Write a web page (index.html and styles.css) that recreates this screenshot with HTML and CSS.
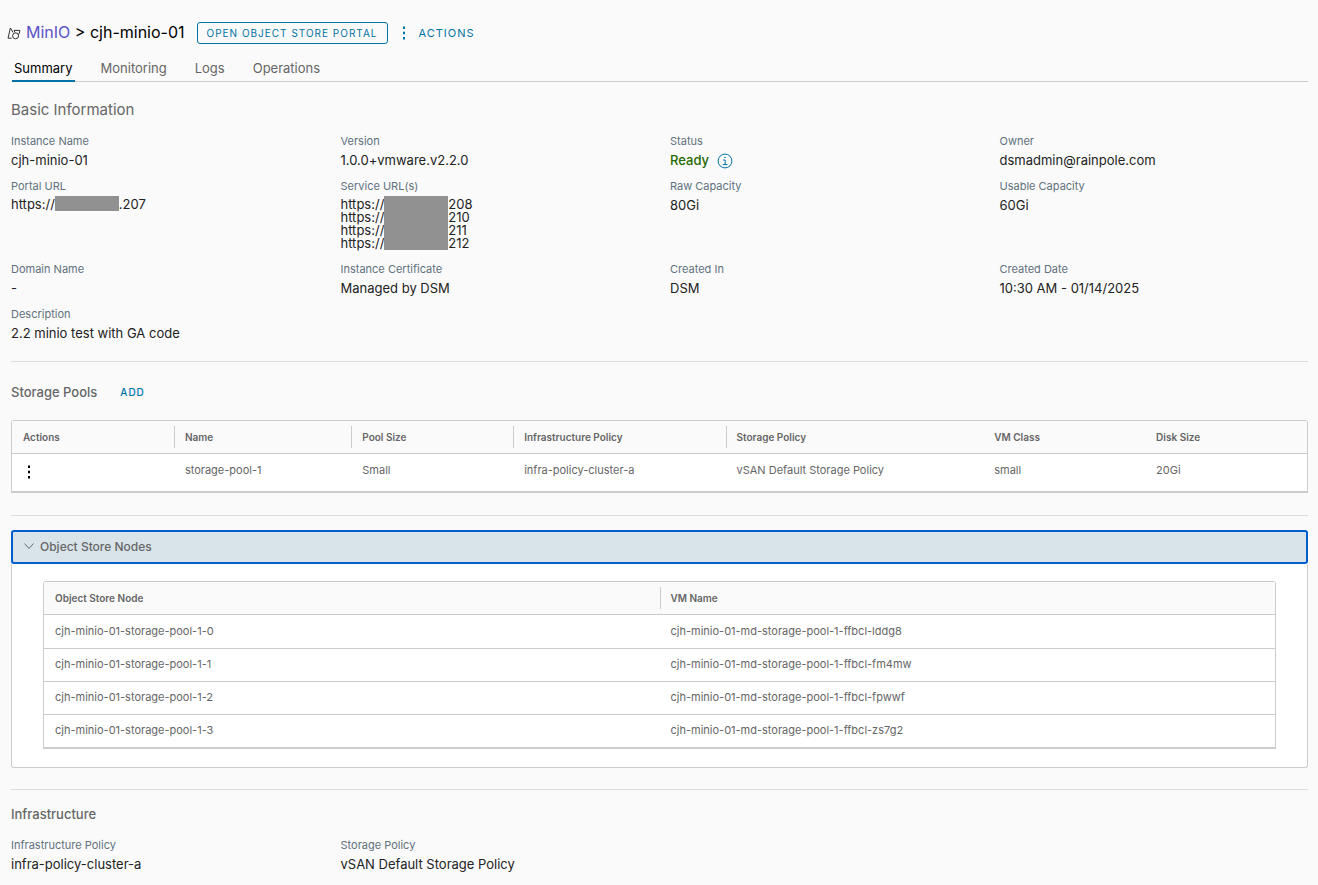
FILE: index.html
```html
<!DOCTYPE html>
<html lang="en">
<head>
    <meta charset="UTF-8">
    <meta name="viewport" content="width=device-width, initial-scale=1.0">
    <title>cjh-minio-01 - MinIO</title>
    <link rel="stylesheet" href="styles.css">
</head>
<body>
    <!-- Header -->
    <header class="page-header">
        <svg class="minio-icon" viewBox="0 0 14 14" width="14" height="14" aria-hidden="true">
            <path d="M4.6 12.2H1L3.4 2L6 6.4M7 4.4H12.8L12.4 7L11.2 8.6M7 4.4L7.8 6.4"/>
            <circle cx="8.6" cy="9.8" r="3"/>
        </svg>
        <h1><a href="#">MinIO</a> &gt; cjh-minio-01</h1>
        <button type="button" class="btn-outline">Open Object Store Portal</button>
        <button type="button" class="btn-actions">
            <svg viewBox="0 0 4 14" width="4" height="14" aria-hidden="true">
                <path d="M1 0.5h2v2.4h-2zM1 5.8h2v2.4h-2zM1 11.1h2v2.4h-2z"/>
            </svg>
            Actions
        </button>
    </header>

    <nav class="tabs">
        <a href="#" class="active">Summary</a>
        <a href="#">Monitoring</a>
        <a href="#">Logs</a>
        <a href="#">Operations</a>
    </nav>

    <main>
        <!-- Basic Information -->
        <section>
            <h2 class="title-light">Basic Information</h2>
            <dl class="info-grid">
                <div><dt>Instance Name</dt><dd>cjh-minio-01</dd></div>
                <div><dt>Version</dt><dd>1.0.0+vmware.v2.2.0</dd></div>
                <div>
                    <dt>Status</dt>
                    <dd class="status">
                        Ready
                        <svg viewBox="0 0 16 16" width="16" height="16" aria-hidden="true">
                            <circle cx="8" cy="8" r="6.9"/>
                            <path d="M6 7h2.2v4.6M5.7 11.6h4.8M7.2 4.4h1.6"/>
                        </svg>
                    </dd>
                </div>
                <div><dt>Owner</dt><dd>dsmadmin@rainpole.com</dd></div>
                <div>
                    <dt>Portal URL</dt>
                    <dd class="urls"><span>https://</span><span class="redacted"></span><span>.207</span></dd>
                </div>
                <div>
                    <dt>Service URL(s)</dt>
                    <dd class="urls">
                        <span>https://<br>https://<br>https://<br>https://</span>
                        <span class="redacted"></span>
                        <span>208<br>210<br>211<br>212</span>
                    </dd>
                </div>
                <div><dt>Raw Capacity</dt><dd>80Gi</dd></div>
                <div><dt>Usable Capacity</dt><dd>60Gi</dd></div>
                <div><dt>Domain Name</dt><dd>-</dd></div>
                <div><dt>Instance Certificate</dt><dd>Managed by DSM</dd></div>
                <div><dt>Created In</dt><dd>DSM</dd></div>
                <div><dt>Created Date</dt><dd>10:30 AM - 01/14/2025</dd></div>
                <div><dt>Description</dt><dd>2.2 minio test with GA code</dd></div>
            </dl>
        </section>

        <!-- Storage Pools -->
        <section class="divided pools">
            <div class="pools-head">
                <h2>Storage Pools</h2>
                <button type="button" class="btn-link">Add</button>
            </div>
            <table class="datagrid pools-grid">
                <thead>
                    <tr>
                        <th class="col-md"><span>Actions</span></th>
                        <th class="col-name"><span>Name</span></th>
                        <th class="col-md"><span>Pool Size</span></th>
                        <th class="col-infra"><span>Infrastructure Policy</span></th>
                        <th class="col-storage"><span>Storage Policy</span></th>
                        <th class="col-md plain"><span>VM Class</span></th>
                        <th class="plain"><span>Disk Size</span></th>
                    </tr>
                </thead>
                <tbody>
                    <tr>
                        <td>
                            <button type="button" class="row-menu" aria-label="Row actions">
                                <svg viewBox="0 0 4 14" width="4" height="14" aria-hidden="true">
                                    <path d="M1 0.5h2v2.4h-2zM1 5.8h2v2.4h-2zM1 11.1h2v2.4h-2z"/>
                                </svg>
                            </button>
                        </td>
                        <td>storage-pool-1</td>
                        <td>Small</td>
                        <td>infra-policy-cluster-a</td>
                        <td>vSAN Default Storage Policy</td>
                        <td>small</td>
                        <td>20Gi</td>
                    </tr>
                </tbody>
            </table>
        </section>

        <!-- Object Store Nodes -->
        <section class="divided nodes">
            <button type="button" class="accordion-header" aria-expanded="true">
                <svg viewBox="0 0 12 8" width="12" height="8" aria-hidden="true">
                    <path d="M1.5 1.5 L6 6.5 L10.5 1.5"/>
                </svg>
                Object Store Nodes
            </button>
            <div class="accordion-content">
                <table class="datagrid">
                    <thead>
                        <tr>
                            <th><span>Object Store Node</span></th>
                            <th><span>VM Name</span></th>
                        </tr>
                    </thead>
                    <tbody>
                        <tr><td>cjh-minio-01-storage-pool-1-0</td><td>cjh-minio-01-md-storage-pool-1-ffbcl-lddg8</td></tr>
                        <tr><td>cjh-minio-01-storage-pool-1-1</td><td>cjh-minio-01-md-storage-pool-1-ffbcl-fm4mw</td></tr>
                        <tr><td>cjh-minio-01-storage-pool-1-2</td><td>cjh-minio-01-md-storage-pool-1-ffbcl-fpwwf</td></tr>
                        <tr><td>cjh-minio-01-storage-pool-1-3</td><td>cjh-minio-01-md-storage-pool-1-ffbcl-zs7g2</td></tr>
                    </tbody>
                </table>
            </div>
        </section>

        <!-- Infrastructure -->
        <section class="divided infra">
            <h2>Infrastructure</h2>
            <dl class="info-grid">
                <div><dt>Infrastructure Policy</dt><dd>infra-policy-cluster-a</dd></div>
                <div><dt>Storage Policy</dt><dd>vSAN Default Storage Policy</dd></div>
            </dl>
        </section>
    </main>
</body>
</html>
```
FILE: styles.css
```css
* {
    box-sizing: border-box;
}

body {
    margin: 0;
    padding: 0 10px 0 11px;
    font-family: Inter, "Liberation Sans", sans-serif;
    font-size: 12px;
    color: #666;
    background: #fafafa;
}

h1, h2, dl, dd {
    margin: 0;
}

a {
    text-decoration: none;
}

button {
    font-family: inherit;
    padding: 0;
    border: none;
    background: none;
    cursor: pointer;
}

/* Header */
.page-header {
    display: flex;
    align-items: center;
    height: 44px;
    margin: 11px 0 0 -4px;
}

.minio-icon {
    margin-right: 5px;
    fill: none;
    stroke: #333;
}

h1 {
    padding-bottom: 2px;
    font-size: 16px;
    font-weight: 400;
    line-height: 20px;
    color: #000;
}

h1 a {
    color: #5b52c7;
}

.btn-outline {
    height: 22px;
    margin-left: 12px;
    padding: 0 9px;
    border: 1px solid #0072a3;
    border-radius: 3px;
    font-size: 10px;
    font-weight: 400;
    letter-spacing: 1px;
    text-transform: uppercase;
    color: #0072a3;
}

.btn-actions {
    display: flex;
    align-items: center;
    gap: 13px;
    margin-left: 14px;
    font-size: 11px;
    font-weight: 400;
    letter-spacing: 1px;
    text-transform: uppercase;
    color: #0072a3;
}

.btn-actions svg {
    fill: #0072a3;
}

/* Tabs */
.tabs {
    display: flex;
    gap: 24px;
    margin-left: 1px;
    border-bottom: 1px solid #ccc;
}

.tabs a {
    height: 27px;
    margin-bottom: -1px;
    padding: 0 2px;
    font-size: 13px;
    line-height: 26px;
    color: #666;
}

.tabs .active {
    color: #000;
    border-bottom: 2px solid #0072a3;
}

/* Sections */
h2 {
    font-size: 13px;
    font-weight: 500;
    line-height: 20px;
}

.title-light {
    margin: 18px 0 13px;
    font-size: 15px;
    font-weight: 400;
}

.divided {
    border-top: 1px solid #ddd;
}

.info-grid {
    display: grid;
    grid-template-columns: repeat(4, 1fr);
    row-gap: 11px;
    margin-right: -21px;
}

.info-grid dt {
    font-size: 11px;
    line-height: 16px;
    color: #61717d;
}

.info-grid dd {
    margin-top: 5px;
    font-size: 13px;
    line-height: 13px;
    color: #222;
}

.info-grid .status {
    display: flex;
    align-items: center;
    gap: 8px;
    height: 13px;
    font-weight: 500;
    color: #266900;
}

.status svg {
    fill: none;
    stroke: #0072a3;
}

.info-grid .urls {
    display: flex;
    margin-top: 4px;
}

.redacted {
    width: 64px;
    margin: -2px 0 0;
    background: #919191;
}

/* Storage Pools */
.pools {
    margin-top: 21px;
    padding-top: 20px;
}

.pools-head {
    display: flex;
    align-items: center;
    gap: 23px;
}

.btn-link {
    font-size: 10px;
    font-weight: 500;
    letter-spacing: 1px;
    text-transform: uppercase;
    color: #0072a3;
}

/* Datagrid */
.datagrid {
    width: 100%;
    table-layout: fixed;
    border: 1px solid #ccc;
    border-bottom-width: 2px;
    border-radius: 3px 3px 0 0;
    border-spacing: 0;
    background: #fff;
}

.pools-grid {
    margin: 18px 0 22px;
}

.datagrid th {
    height: 33px;
    padding: 0;
    border-bottom: 1px solid #ccc;
    font-size: 10px;
    font-weight: 600;
    text-align: left;
    background: #fafafa;
}

.datagrid th span {
    display: block;
    padding-left: 10px;
    border-left: 1px solid #ccc;
    line-height: 22px;
}

.datagrid th:first-child span,
.datagrid .plain span {
    border-left-color: transparent;
}

.datagrid td {
    height: 33px;
    padding: 0 0 2px 11px;
    font-size: 11px;
}

.datagrid tr + tr td {
    border-top: 1px solid #ccc;
}

.pools-grid tbody td {
    height: 37px;
    padding-bottom: 6px;
}

.col-md {
    width: 12.5%;
}

.col-name {
    width: 13.7%;
}

.col-infra {
    width: 16.4%;
}

.col-storage {
    width: 19.9%;
}

.row-menu {
    display: block;
    padding: 4px 4px 0;
}

.row-menu svg {
    display: block;
    fill: #000;
}

/* Object Store Nodes */
.nodes {
    padding-top: 14px;
}

.accordion-header {
    display: flex;
    align-items: center;
    gap: 5px;
    width: 100%;
    height: 34px;
    padding: 0 10px 2px;
    border: 2px solid #005fcc;
    border-radius: 3px;
    font-size: 12px;
    font-weight: 500;
    color: #666;
    background: #d9e4ea;
}

.accordion-header svg {
    fill: none;
    stroke: #666;
}

.accordion-content {
    padding: 17px 31px 18px;
    border: 1px solid #ccc;
    border-top: none;
    border-radius: 0 0 3px 3px;
    background: #fff;
}

/* Infrastructure */
.infra {
    margin-top: 21px;
    padding: 14px 0 12px;
}

.infra .info-grid {
    margin-top: 13px;
}
```
